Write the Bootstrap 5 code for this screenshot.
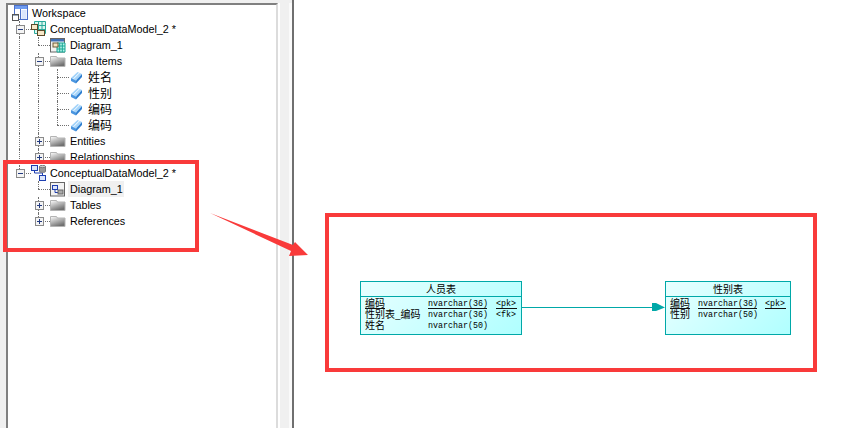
<!DOCTYPE html>
<html lang="en">
<head>
  <meta charset="UTF-8">
  <meta name="viewport" content="width=device-width, initial-scale=1">
  <title>Workspace</title>
  <link href="https://cdn.jsdelivr.net/npm/bootstrap@5.3.2/dist/css/bootstrap.min.css" rel="stylesheet">
  <style>
    html, body { height: 100%; background: #fff; overflow: hidden; }
    .app-frame { height: 428px; width: 844px; position: relative; }
    .side-panel { width: 294px; height: 428px; background: #f0f0f0; padding: 3px 0 0 6px; border-right: 2px solid #6f6f6f; }
    .tree-pane { width: 272px; height: 425px; background: #fff; border-top: 2px solid #808080; border-left: 2px solid #808080; border-right: 2px solid #dcdcdc; padding: 0 0 0 3px; }
    .side-gap { width: 14px; border-left: 2px solid #fff; border-right: 3px solid #fafafa; }
    .tree-row { height: 16px; font: 10.8px/16px "Liberation Sans", "Noto Sans CJK SC", sans-serif; color: #000; white-space: nowrap; }
    .tree-row.clipped { height: 11px; overflow: hidden; margin-bottom: 5px; }
    .cjk-label { font-family: "Noto Sans CJK SC", sans-serif; font-size: 12px; }
    .tree-cell { width: 19px; height: 16px; flex: none; position: relative; }
    .tree-cell.v-line::before { content: ""; position: absolute; left: 8px; top: 0; bottom: 0; border-left: 1px dotted #707070; }
    .tree-cell.v-half::before { content: ""; position: absolute; left: 8px; top: 0; height: 8px; border-left: 1px dotted #707070; }
    .tree-cell.h-line::after { content: ""; position: absolute; left: 8px; right: -1px; top: 8px; border-top: 1px dotted #707070; }
    .tree-exp { position: absolute; left: 5px; top: 4px; width: 9px; height: 9px; display: block; z-index: 1; }
    .tree-ico { width: 16px; height: 16px; margin: 0 4px 0 1px; flex: none; display: block; }
    .tree-ico.ico-tight { margin-right: 3px; }
    .tree-label.active-label { background: #f0f0f0; padding: 0 1px 0 2px; margin-left: -2px; }
    .note-box { position: absolute; border: 4px solid #f93a3a; }
    .note-tree { left: 3px; top: 160px; width: 196px; height: 92px; }
    .note-model { left: 325px; top: 213px; width: 492px; height: 159px; }
    .note-arrow { position: absolute; left: 200px; top: 200px; width: 120px; height: 70px; }
    .entity-box { position: absolute; top: 281px; height: 54px; border: 1px solid #00a8a8; background: linear-gradient(135deg, #e8ffff, #b0ffff); color: #000; font-family: "Liberation Mono", "Noto Sans CJK SC", monospace; }
    .entity-people { left: 360px; width: 162px; }
    .entity-gender { left: 665px; width: 126px; }
    .entity-title { height: 15px; border-bottom: 1px solid #00a8a8; font: 10px/14px "Noto Sans CJK SC", sans-serif; text-align: center; }
    .entity-rows { padding: 1px 4px 0; display: grid; grid-auto-rows: 11px; column-gap: 9px; }
    .entity-people .entity-rows { grid-template-columns: 54px 59px 21px; }
    .entity-gender .entity-rows { grid-template-columns: 20px 59px 21px; column-gap: 8px; }
    .entity-rows span { font-size: 8.33px; line-height: 12px; white-space: nowrap; height: 11px; }
    .entity-rows .attr-name { font: 10px/10px "Noto Sans CJK SC", sans-serif; }
    .entity-rows .attr-short { justify-self: start; }
    .pk-line { border-bottom: 1px solid #111; }
    .link-layer { position: absolute; left: 521px; top: 296px; width: 146px; height: 20px; }
  </style>
</head>
<body>
  <div class="app-frame">
    <div class="side-panel d-flex">
      <div class="tree-pane">
        <div class="tree-row d-flex align-items-center">
          <svg class="tree-ico" viewBox="0 0 16 16"><rect x="2.500" y=".5" width="13" height="14" fill="#fff" stroke="#4a6fc9"/><rect x="3" y="1" width="12" height="3" fill="#6f9cf0"/><path d="M8.500 4v10" stroke="#4a6fc9"/><rect x="9.500" y="5" width="5" height="9" fill="#dbe6fb"/><rect x=".5" y="9.500" width="6" height="6" fill="#fff" stroke="#555"/><rect x="1" y="10" width="5" height="1" fill="#9ab"/></svg>
          <span class="tree-label">Workspace</span>
        </div>
        <div class="tree-row d-flex align-items-center">
          <div class="tree-cell v-line h-line"><svg class="tree-exp" viewBox="0 0 9 9"><use href="#ico-minus"/></svg></div>
          <svg class="tree-ico ico-tight" viewBox="0 0 16 16"><path d="M3.500.5h11v12h-11z" fill="#d8f6ee" stroke="#2aa89a"/><path d="M7.500.5v12M11 .5v12M3.500 4.500h11M3.500 8.500h11" stroke="#2aa89a"/><rect x=".5" y="3.500" width="6" height="5" fill="#f7e7c8" stroke="#5c4a2a"/><rect x="6.500" y="9.500" width="7" height="5" fill="#f7e7c8" stroke="#5c4a2a"/></svg>
          <span class="tree-label">ConceptualDataModel_2 *</span>
        </div>
        <div class="tree-row d-flex align-items-center">
          <div class="tree-cell v-line"></div>
          <div class="tree-cell v-half h-line"></div>
          <svg class="tree-ico" viewBox="0 0 16 16"><rect x=".5" y="1.500" width="14" height="13.500" fill="#f2f2f2" stroke="#666"/><rect x="1" y="2" width="13" height="2.500" fill="#3f6fb5"/><path d="M7 6h8v9H7z" fill="#b8f3ea" stroke="#19a795"/><path d="M9.700 6v9M12.300 6v9M7 9h8M7 12h8" stroke="#19a795"/><rect x="3" y="6" width="5" height="4" fill="#f4e4c0" stroke="#6b5a3a"/></svg>
          <span class="tree-label">Diagram_1</span>
        </div>
        <div class="tree-row d-flex align-items-center">
          <div class="tree-cell v-line"></div>
          <div class="tree-cell v-line h-line"><svg class="tree-exp" viewBox="0 0 9 9"><use href="#ico-minus"/></svg></div>
          <svg class="tree-ico" viewBox="0 0 16 16"><use href="#ico-folder"/></svg>
          <span class="tree-label">Data Items</span>
        </div>
        <div class="tree-row d-flex align-items-center">
          <div class="tree-cell v-line"></div><div class="tree-cell v-line"></div><div class="tree-cell v-line h-line"></div>
          <svg class="tree-ico ico-tight" viewBox="0 0 16 16"><use href="#ico-item"/></svg>
          <span class="tree-label cjk-label">姓名</span>
        </div>
        <div class="tree-row d-flex align-items-center">
          <div class="tree-cell v-line"></div><div class="tree-cell v-line"></div><div class="tree-cell v-line h-line"></div>
          <svg class="tree-ico ico-tight" viewBox="0 0 16 16"><use href="#ico-item"/></svg>
          <span class="tree-label cjk-label">性别</span>
        </div>
        <div class="tree-row d-flex align-items-center">
          <div class="tree-cell v-line"></div><div class="tree-cell v-line"></div><div class="tree-cell v-line h-line"></div>
          <svg class="tree-ico ico-tight" viewBox="0 0 16 16"><use href="#ico-item"/></svg>
          <span class="tree-label cjk-label">编码</span>
        </div>
        <div class="tree-row d-flex align-items-center">
          <div class="tree-cell v-line"></div><div class="tree-cell v-line"></div><div class="tree-cell v-half h-line"></div>
          <svg class="tree-ico ico-tight" viewBox="0 0 16 16"><use href="#ico-item"/></svg>
          <span class="tree-label cjk-label">编码</span>
        </div>
        <div class="tree-row d-flex align-items-center">
          <div class="tree-cell v-line"></div>
          <div class="tree-cell v-line h-line"><svg class="tree-exp" viewBox="0 0 9 9"><use href="#ico-plus"/></svg></div>
          <svg class="tree-ico" viewBox="0 0 16 16"><use href="#ico-folder"/></svg>
          <span class="tree-label">Entities</span>
        </div>
        <div class="tree-row clipped d-flex align-items-start">
          <div class="tree-cell v-line"></div>
          <div class="tree-cell v-half h-line"><svg class="tree-exp" viewBox="0 0 9 9"><use href="#ico-plus"/></svg></div>
          <svg class="tree-ico" viewBox="0 0 16 16"><use href="#ico-folder"/></svg>
          <span class="tree-label">Relationships</span>
        </div>
        <div class="tree-row d-flex align-items-center">
          <div class="tree-cell v-half h-line"><svg class="tree-exp" viewBox="0 0 9 9"><use href="#ico-minus"/></svg></div>
          <svg class="tree-ico ico-tight" viewBox="0 0 16 16"><rect x=".5" y=".5" width="6" height="5" fill="#dce6fb" stroke="#1f3fb0"/><rect x="8.500" y="10.500" width="6" height="5" fill="#dce6fb" stroke="#1f3fb0"/><path d="M3.500 5.500V8h8v2.500" fill="none" stroke="#1f3fb0"/><path d="M8.500 1.500v5c0 1.200 6 1.200 6 0v-5z" fill="#999" stroke="#777"/><ellipse cx="11.500" cy="1.500" rx="3" ry="1.200" fill="#ccc" stroke="#777"/></svg>
          <span class="tree-label">ConceptualDataModel_2 *</span>
        </div>
        <div class="tree-row d-flex align-items-center">
          <div class="tree-cell"></div>
          <div class="tree-cell v-half h-line"></div>
          <svg class="tree-ico" viewBox="0 0 16 16"><rect x=".5" y="1.500" width="14" height="13.500" fill="#f2f2f2" stroke="#666"/><rect x="2.500" y="4.500" width="5" height="4" fill="#dce6fb" stroke="#1f3fb0"/><path d="M5 8.500v3h3" fill="none" stroke="#1f3fb0"/><rect x="8" y="9" width="5" height="4" fill="#aaa" stroke="#666"/></svg>
          <span class="tree-label active-label">Diagram_1</span>
        </div>
        <div class="tree-row d-flex align-items-center">
          <div class="tree-cell"></div>
          <div class="tree-cell v-line h-line"><svg class="tree-exp" viewBox="0 0 9 9"><use href="#ico-plus"/></svg></div>
          <svg class="tree-ico" viewBox="0 0 16 16"><use href="#ico-folder"/></svg>
          <span class="tree-label">Tables</span>
        </div>
        <div class="tree-row d-flex align-items-center">
          <div class="tree-cell"></div>
          <div class="tree-cell v-half h-line"><svg class="tree-exp" viewBox="0 0 9 9"><use href="#ico-plus"/></svg></div>
          <svg class="tree-ico" viewBox="0 0 16 16"><use href="#ico-folder"/></svg>
          <span class="tree-label">References</span>
        </div>
      </div>
      <div class="side-gap"></div>
    </div>

    <div class="entity-box entity-people">
      <div class="entity-title">人员表</div>
      <div class="entity-rows">
        <span class="attr-name attr-short pk-line">编码</span><span class="pk-line">nvarchar(36)</span><span class="pk-line">&lt;pk&gt;</span>
        <span class="attr-name">性别表_编码</span><span>nvarchar(36)</span><span>&lt;fk&gt;</span>
        <span class="attr-name">姓名</span><span>nvarchar(50)</span><span></span>
      </div>
    </div>
    <div class="entity-box entity-gender">
      <div class="entity-title">性别表</div>
      <div class="entity-rows">
        <span class="attr-name attr-short pk-line">编码</span><span class="pk-line">nvarchar(36)</span><span class="pk-line">&lt;pk&gt;</span>
        <span class="attr-name">性别</span><span>nvarchar(50)</span><span></span>
      </div>
    </div>
    <svg class="link-layer" viewBox="0 0 146 20"><path d="M0 11.500h132" stroke="#00a8a8"/><path d="M131 7h4l9 4.500-9 3.500h-4z" fill="#00a8a8"/></svg>

    <div class="note-box note-tree"></div>
    <div class="note-box note-model"></div>
    <svg class="note-arrow" viewBox="0 0 120 70"><path d="M10 13L93 45 95 42 108 55 89 56 91 51z" fill="#f93a3a"/></svg>
  </div>

  <svg width="0" height="0" class="position-absolute">
    <defs>
      <linearGradient id="folder-fill" x1="0" y1="0" x2=".5" y2="1"><stop offset="0" stop-color="#fff"/><stop offset="1" stop-color="#707070"/></linearGradient>
      <g id="ico-folder"><path d="M.5 13.500V3.500h6l1 1.500h7.500v8.500z" fill="url(#folder-fill)" stroke="#b4b4b4"/></g>
      <g id="ico-item"><path d="M2 9l6.500-6L13 5l-6 6.500z" fill="#a4d4fa"/><path d="M2 9l5 2.500v3L2 12z" fill="#4a96e0"/><path d="M7 11.500L13 5v3l-6 6.500z" fill="#2f7fd0"/><path d="M4.500 9.800l6-6" stroke="#fff"/></g>
      <g id="ico-plus"><rect x=".5" y=".5" width="8" height="8" fill="#f4f4f4" stroke="#8a8a8a"/><path d="M2 4.500h5M4.500 2v5" stroke="#223a80"/></g>
      <g id="ico-minus"><rect x=".5" y=".5" width="8" height="8" fill="#f4f4f4" stroke="#8a8a8a"/><path d="M2 4.500h5" stroke="#223a80"/></g>
    </defs>
  </svg>
  <script src="https://cdn.jsdelivr.net/npm/bootstrap@5.3.2/dist/js/bootstrap.bundle.min.js"></script>
</body>
</html>
